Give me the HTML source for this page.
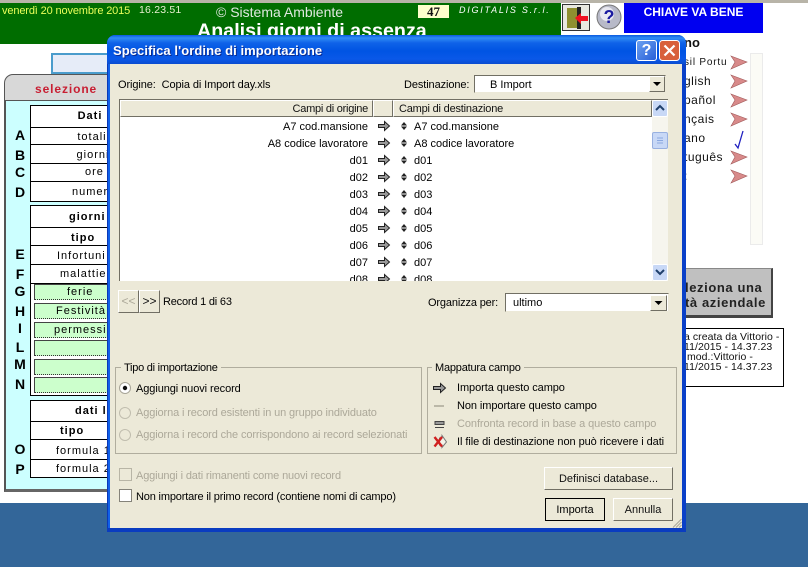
<!DOCTYPE html>
<html><head><meta charset="utf-8">
<style>
html,body{margin:0;padding:0;width:808px;height:567px;overflow:hidden;background:#fff}
body{position:relative;font-family:"Liberation Sans",sans-serif;font-size:11px;color:#000}
.a{position:absolute;white-space:nowrap;box-sizing:border-box}
.c{position:absolute;box-sizing:border-box;background:#fff;border:1px solid #000;border-bottom:none;left:30px;width:90px;text-align:center;font-size:11px;letter-spacing:1px;overflow:hidden;white-space:nowrap}
.g{position:absolute;box-sizing:border-box;left:34px;width:90px;background:#ccffcc;border:1px solid #444;border-right:none;border-bottom:1px dotted #333;text-align:center;font-size:11px;letter-spacing:1px;line-height:15px;height:16px;overflow:hidden}
.l{position:absolute;left:10px;width:20px;text-align:center;font-weight:bold;font-size:14px;line-height:16px}
.r{position:absolute;left:120px;width:248px;text-align:right}
.t{position:absolute;left:414px}
.btn{position:absolute;box-sizing:border-box;background:#ece9d8;border:1px solid;border-color:#fff #716f64 #716f64 #fff;text-align:center;color:#111;font-size:11px}
.dis{color:#aca899}
.lang{position:absolute;font-size:12px;letter-spacing:.5px;color:#111;left:684px;line-height:14px}
</style></head><body>

<!-- background: top -->
<div class="a" style="left:0;top:0;width:808px;height:3px;background:#b8b4a8"></div>
<div class="a" style="left:0;top:3px;width:561px;height:41px;background:#006d00"></div>
<div class="a" style="left:2px;top:5px;color:#eaff5a;font-size:11px;letter-spacing:-.14px">venerdì 20 novembre 2015</div>
<div class="a" style="left:139px;top:4px;color:#e8f0d0;font-size:10.5px;letter-spacing:.2px">16.23.51</div>
<div class="a" style="left:216px;top:4px;color:#dfe8df;font-size:14px">© Sistema Ambiente</div>
<div class="a" style="left:197px;top:20px;color:#fff;font-size:19.7px;font-weight:bold">Analisi giorni di assenza</div>
<div class="a" style="left:418px;top:5px;width:31px;height:13px;background:#ffffcc;text-align:center;font:bold 13px/13px 'Liberation Serif',serif;color:#111">47</div>
<div class="a" style="left:459px;top:3px;color:#fff;font-style:italic;font-size:9px;letter-spacing:1.75px;line-height:15px">DIGITALIS S.r.l.</div>

<!-- exit / help -->
<svg class="a" style="left:561px;top:3px" width="64" height="31" viewBox="0 0 64 31">
<rect x="1.5" y="1.5" width="27" height="26" fill="#e8e8e0" stroke="#333"/>
<rect x="6" y="5" width="10" height="20" fill="#8f8f30"/><rect x="16" y="4" width="4" height="22" fill="#222"/>
<path d="M14 15 L20 10 V13 H27 V18 H20 V21Z" fill="#f01020"/>
<circle cx="48" cy="14" r="12" fill="#b8bac8"/><circle cx="48" cy="14" r="12" fill="none" stroke="#777"/>
<circle cx="46" cy="11" r="7" fill="#e8e8f0"/>
<text x="48" y="20" font-family="Liberation Sans" font-weight="bold" font-size="18" fill="#1a1aa0" text-anchor="middle">?</text>
</svg>
<div class="a" style="left:624px;top:3px;width:139px;height:30px;background:#0000f0;color:#fff;font-weight:bold;font-size:12px;text-align:center;line-height:19px">CHIAVE VA BENE</div>

<!-- left panel -->
<div class="a" style="left:51px;top:53px;width:80px;height:21px;background:#e6ecf8;border:2px solid #4a9ccc"></div>
<div class="a" style="left:4px;top:74px;width:116px;height:27px;background:#d8d8d8;border:1px solid #555;border-bottom:1px solid #888;border-radius:9px 0 0 0"></div>
<div class="a" style="left:35px;top:82px;color:#c81e32;font-weight:bold;font-size:12px;letter-spacing:.9px">selezione</div>
<div class="a" style="left:4px;top:100px;width:116px;height:392px;background:#ccffff;border:1px solid #555;border-left:2px solid #555;border-bottom:3px solid #666"></div>

<div class="c" style="top:105px;height:22px;font-weight:bold;line-height:20px;padding-left:30px">Dati</div>
<div class="c" style="top:127px;height:18px;line-height:18px;padding-left:34px">totali</div>
<div class="c" style="top:144px;height:20px;line-height:21px;padding-left:36px">giorni</div>
<div class="c" style="top:163px;height:19px;line-height:17px;padding-left:54px;text-align:left">ore</div>
<div class="c" style="top:181px;height:21px;border-bottom:1px solid #000;line-height:21px;padding-left:41px;text-align:left">numero</div>
<div class="c" style="top:205px;height:23px;font-weight:bold;line-height:22px;padding-left:38px;text-align:left">giorni</div>
<div class="c" style="top:227px;height:19px;font-weight:bold;line-height:20px;padding-left:40px;text-align:left">tipo</div>
<div class="c" style="top:245px;height:20px;line-height:20px;padding-left:26px;text-align:left">Infortuni</div>
<div class="c" style="top:264px;height:20px;line-height:19px;padding-left:29px;text-align:left">malattie</div>
<div class="c" style="top:283px;height:113px;border-bottom:1px solid #000"></div>
<div class="g" style="top:284px;text-align:left;text-indent:32px">ferie</div>
<div class="g" style="top:303px;text-align:left;text-indent:21px">Festività</div>
<div class="g" style="top:322px;text-align:left;text-indent:19px">permessi</div>
<div class="g" style="top:340px"></div>
<div class="g" style="top:359px"></div>
<div class="g" style="top:377px"></div>
<div class="c" style="top:400px;height:22px;font-weight:bold;line-height:21px;padding-left:44px;text-align:left">dati l</div>
<div class="c" style="top:421px;height:19px;font-weight:bold;line-height:18px;padding-left:29px;text-align:left">tipo</div>
<div class="c" style="top:439px;height:21px;line-height:22px;padding-left:25px;text-align:left">formula 1</div>
<div class="c" style="top:459px;height:19px;border-bottom:1px solid #000;line-height:19px;padding-left:25px;text-align:left">formula 2</div>

<div class="l" style="top:127px">A</div><div class="l" style="top:147px">B</div><div class="l" style="top:164px">C</div>
<div class="l" style="top:184px">D</div><div class="l" style="top:246px">E</div><div class="l" style="top:266px">F</div>
<div class="l" style="top:283px">G</div><div class="l" style="top:303px">H</div><div class="l" style="top:320px">I</div>
<div class="l" style="top:339px">L</div><div class="l" style="top:356px">M</div><div class="l" style="top:376px">N</div>
<div class="l" style="top:441px">O</div><div class="l" style="top:461px">P</div>

<!-- right side behind dialog -->
<div class="a" style="left:684px;top:35px;font-weight:bold;font-size:13px;color:#111">no</div>
<div class="a" style="left:750px;top:53px;width:13px;height:192px;background:#fbfbf6;border:1px solid #ebebeb"></div>
<div class="a" style="left:684px;top:57px;font-size:10px;letter-spacing:.8px;color:#111">sil Portu</div>
<div class="lang" style="top:74px">glish</div>
<div class="lang" style="top:93px">pañol</div>
<div class="lang" style="top:112px">nçais</div>
<div class="lang" style="top:131px">ano</div>
<div class="lang" style="top:150px">tuguês</div>
<div class="lang" style="top:169px">:</div>
<svg class="a" style="left:730px;top:54px" width="18" height="135" viewBox="0 0 18 135">
<g fill="#d88a8a" stroke="#a05858" stroke-width=".6">
<path d="M1 2 L17 8 L1 15 L5 8Z"/><path d="M1 21 L17 27 L1 34 L5 27Z"/><path d="M1 40 L17 46 L1 53 L5 46Z"/><path d="M1 59 L17 65 L1 72 L5 65Z"/><path d="M1 97 L17 103 L1 110 L5 103Z"/><path d="M1 116 L17 122 L1 129 L5 122Z"/>
</g>
<path d="M5 90 L8 94 L13 77" fill="none" stroke="#2020c0" stroke-width="1.3"/>
</svg>
<div class="a" style="left:684px;top:268px;width:89px;height:50px;background:#c0c0c0;border:1px solid #888;border-right:2px solid #444;border-bottom:3px solid #444;font-weight:bold;font-size:13px;letter-spacing:.6px;line-height:15px;padding-top:11px;color:#222">leziona una<br>tà aziendale</div>
<div class="a" style="left:684px;top:328px;width:100px;height:59px;background:#fff;border:1px solid #000;border-left:none;font-size:10.5px;line-height:10px;padding-top:3px;letter-spacing:.05px;color:#111">a creata da Vittorio -<br>11/2015 - 14.37.23<br>&nbsp;mod.:Vittorio -<br>11/2015 - 14.37.23</div>

<!-- bottom band -->
<div class="a" style="left:0;top:503px;width:808px;height:64px;background:#336699"></div>

<!-- dialog -->
<div class="a" style="left:107px;top:35px;width:579px;height:497px;background:#0a40d8;border-radius:8px 8px 0 0"></div>
<div class="a" style="left:107px;top:35px;width:579px;height:29px;border-radius:8px 8px 0 0;background:linear-gradient(180deg,#0a5ae0 0,#2f8cf5 3px,#0f62e8 8px,#0054e3 16px,#0a58e8 24px,#0a4cd0 29px)"></div>
<div class="a" style="left:107px;top:64px;width:1px;height:468px;background:#0a38b8"></div>
<div class="a" style="left:108px;top:64px;width:2px;height:464px;background:#1060e8"></div>
<div class="a" style="left:682px;top:64px;width:4px;height:468px;background:#0a40c8"></div>
<div class="a" style="left:107px;top:528px;width:579px;height:4px;background:#0a3cc0"></div>
<div class="a" style="left:113px;top:43px;color:#fff;font-weight:bold;font-size:13px;line-height:16px;text-shadow:1px 1px 0 #0a2a90;letter-spacing:.07px">Specifica l'ordine di importazione</div>

<div class="a" style="left:636px;top:40px;width:21px;height:21px;background:linear-gradient(135deg,#6aa0f0,#2a60d8);border:1px solid #fff;border-radius:3px;color:#fff;font-weight:bold;font-size:16px;line-height:19px;text-align:center">?</div>
<svg class="a" style="left:659px;top:40px" width="21" height="21" viewBox="0 0 21 21">
<rect x=".5" y=".5" width="20" height="20" rx="3" fill="#d8603c" stroke="#fff"/>
<path d="M5.5 5.5 L15.5 15.5 M15.5 5.5 L5.5 15.5" stroke="#fff" stroke-width="2.2"/>
</svg>

<!-- body -->
<div class="a" style="left:110px;top:64px;width:572px;height:464px;background:#ece9d8"></div>

<div class="a" style="left:118px;top:79px;letter-spacing:-.1px">Origine:&nbsp; Copia di Import day.xls</div>
<div class="a" style="left:404px;top:79px;letter-spacing:-.1px">Destinazione:</div>
<div class="a" style="left:474px;top:75px;width:192px;height:18px;background:#fff;border:1px solid;border-color:#716f64 #ece9d8 #ece9d8 #716f64;padding:3px 0 0 15px">B Import</div>
<div class="btn" style="left:649px;top:76px;width:16px;height:16px"></div>
<svg class="a" style="left:649px;top:76px" width="16" height="16"><path d="M4 6 H12 L8 10Z" fill="#000"/></svg>

<!-- table -->
<div class="a" style="left:119px;top:99px;width:549px;height:182px;background:#fff;border-left:1px solid #716f64;border-top:1px solid #716f64;overflow:hidden"></div>
<div class="btn" style="left:120px;top:100px;width:253px;height:17px;text-align:right;padding-right:4px;line-height:17px;letter-spacing:-.25px">Campi di origine</div>
<div class="btn" style="left:373px;top:100px;width:20px;height:17px"></div>
<div class="btn" style="left:393px;top:100px;width:259px;height:17px;text-align:left;padding-left:5px;line-height:17px;letter-spacing:-.2px">Campi di destinazione</div>
<div class="a" style="left:652px;top:100px;width:16px;height:181px;background:#f6f5ee"></div>
<div class="a" style="left:652px;top:100px;width:16px;height:17px;background:#c8d8f6;border:1px solid #fff;border-radius:2px"></div>
<svg class="a" style="left:652px;top:100px" width="16" height="17"><path d="M4 10 L8 6 L12 10" fill="none" stroke="#20406c" stroke-width="2"/></svg>
<div class="a" style="left:652px;top:132px;width:16px;height:17px;background:#c8d8f6;border:1px solid #98b0e0;border-radius:2px"></div>
<svg class="a" style="left:652px;top:132px" width="16" height="17"><path d="M5 6 H11 M5 8.5 H11 M5 11 H11" stroke="#8aa8e0"/></svg>
<div class="a" style="left:652px;top:264px;width:16px;height:17px;background:#c8d8f6;border:1px solid #fff;border-radius:2px"></div>
<svg class="a" style="left:652px;top:264px" width="16" height="17"><path d="M4 6 L8 10 L12 6" fill="none" stroke="#20406c" stroke-width="2"/></svg>

<div class="a" style="left:120px;top:117px;width:532px;height:164px;overflow:hidden">
<div style="position:relative;left:-120px;top:-117px;width:660px;height:300px">
<div class="r" style="top:121px">A7 cod.mansione</div><div class="t" style="top:121px">A7 cod.mansione</div>
<div class="r" style="top:138px">A8 codice lavoratore</div><div class="t" style="top:138px">A8 codice lavoratore</div>
<div class="r" style="top:155px">d01</div><div class="t" style="top:155px">d01</div>
<div class="r" style="top:172px">d02</div><div class="t" style="top:172px">d02</div>
<div class="r" style="top:189px">d03</div><div class="t" style="top:189px">d03</div>
<div class="r" style="top:206px">d04</div><div class="t" style="top:206px">d04</div>
<div class="r" style="top:223px">d05</div><div class="t" style="top:223px">d05</div>
<div class="r" style="top:240px">d06</div><div class="t" style="top:240px">d06</div>
<div class="r" style="top:257px">d07</div><div class="t" style="top:257px">d07</div>
<div class="r" style="top:274px">d08</div><div class="t" style="top:274px">d08</div>
<svg style="position:absolute;left:376px;top:118px" width="34" height="170" viewBox="0 0 34 170">
<g fill="#999" stroke="#222">
<path d="M2.5 6.5 H8.5 V3.5 L13.5 8 L8.5 12.5 V9.5 H2.5Z"/>
<path d="M2.5 23.5 H8.5 V20.5 L13.5 25 L8.5 29.5 V26.5 H2.5Z"/>
<path d="M2.5 40.5 H8.5 V37.5 L13.5 42 L8.5 46.5 V43.5 H2.5Z"/>
<path d="M2.5 57.5 H8.5 V54.5 L13.5 59 L8.5 63.5 V60.5 H2.5Z"/>
<path d="M2.5 74.5 H8.5 V71.5 L13.5 76 L8.5 80.5 V77.5 H2.5Z"/>
<path d="M2.5 91.5 H8.5 V88.5 L13.5 93 L8.5 97.5 V94.5 H2.5Z"/>
<path d="M2.5 108.5 H8.5 V105.5 L13.5 110 L8.5 114.5 V111.5 H2.5Z"/>
<path d="M2.5 125.5 H8.5 V122.5 L13.5 127 L8.5 131.5 V128.5 H2.5Z"/>
<path d="M2.5 142.5 H8.5 V139.5 L13.5 144 L8.5 148.5 V145.5 H2.5Z"/>
<path d="M2.5 159.5 H8.5 V156.5 L13.5 161 L8.5 165.5 V162.5 H2.5Z"/>
</g>
<g fill="#222">
<path d="M28 4 L31 7.5 H25Z M25 8.5 H31 L28 12Z"/>
<path d="M28 21 L31 24.5 H25Z M25 25.5 H31 L28 29Z"/>
<path d="M28 38 L31 41.5 H25Z M25 42.5 H31 L28 46Z"/>
<path d="M28 55 L31 58.5 H25Z M25 59.5 H31 L28 63Z"/>
<path d="M28 72 L31 75.5 H25Z M25 76.5 H31 L28 80Z"/>
<path d="M28 89 L31 92.5 H25Z M25 93.5 H31 L28 97Z"/>
<path d="M28 106 L31 109.5 H25Z M25 110.5 H31 L28 114Z"/>
<path d="M28 123 L31 126.5 H25Z M25 127.5 H31 L28 131Z"/>
<path d="M28 140 L31 143.5 H25Z M25 144.5 H31 L28 148Z"/>
<path d="M28 157 L31 160.5 H25Z M25 161.5 H31 L28 165Z"/>
</g></svg>
</div></div>

<!-- nav -->
<div class="btn dis" style="left:118px;top:290px;width:21px;height:23px;line-height:21px;font-size:12px">&lt;&lt;</div>
<div class="btn" style="left:139px;top:290px;width:21px;height:23px;line-height:21px;font-size:12px">&gt;&gt;</div>
<div class="a" style="left:163px;top:296px;letter-spacing:-.2px">Record 1 di 63</div>
<div class="a" style="left:428px;top:297px;letter-spacing:-.15px">Organizza per:</div>
<div class="a" style="left:505px;top:293px;width:164px;height:19px;background:#fff;border:1px solid;border-color:#716f64 #ece9d8 #ece9d8 #716f64;padding:3px 0 0 7px">ultimo</div>
<div class="btn" style="left:650px;top:295px;width:17px;height:16px"></div>
<svg class="a" style="left:650px;top:295px" width="17" height="16"><path d="M4.5 6 H12.5 L8.5 10Z" fill="#000"/></svg>

<!-- group 1 -->
<div class="a" style="left:115px;top:367px;width:307px;height:87px;border:1px solid #b0ad9e"></div>
<div class="a" style="left:121px;top:362px;background:#ece9d8;padding:0 3px;letter-spacing:-.25px">Tipo di importazione</div>
<svg class="a" style="left:118px;top:381px" width="14" height="62">
<circle cx="7" cy="7" r="5.5" fill="#fff" stroke="#a8a598"/><circle cx="7" cy="7" r="2.2" fill="#111"/>
<circle cx="7" cy="32" r="5.5" fill="#ece9d8" stroke="#c0bdae"/>
<circle cx="7" cy="54" r="5.5" fill="#ece9d8" stroke="#c0bdae"/>
</svg>
<div class="a" style="left:136px;top:383px;letter-spacing:-.08px">Aggiungi nuovi record</div>
<div class="a dis" style="left:136px;top:407px;letter-spacing:-.12px">Aggiorna i record esistenti in un gruppo individuato</div>
<div class="a dis" style="left:136px;top:429px;letter-spacing:-.12px">Aggiorna i record che corrispondono ai record selezionati</div>

<!-- group 2 -->
<div class="a" style="left:427px;top:367px;width:250px;height:87px;border:1px solid #b0ad9e"></div>
<div class="a" style="left:432px;top:362px;background:#ece9d8;padding:0 3px;letter-spacing:-.2px">Mappatura campo</div>
<div class="a" style="left:457px;top:382px;letter-spacing:-.08px">Importa questo campo</div>
<div class="a" style="left:457px;top:400px;letter-spacing:-.08px">Non importare questo campo</div>
<div class="a dis" style="left:457px;top:418px;letter-spacing:-.08px">Confronta record in base a questo campo</div>
<div class="a" style="left:457px;top:436px;letter-spacing:-.07px">Il file di destinazione non può ricevere i dati</div>
<svg class="a" style="left:432px;top:380px" width="16" height="70">
<path d="M1.5 6.5 H8.5 V3.5 L13.5 8 L8.5 12.5 V9.5 H1.5Z" fill="#999" stroke="#222"/>
<path d="M2 26 H12" stroke="#8a8878"/>
<path d="M3 41.5 H12 V44.5 H3Z" fill="#999" stroke="#444"/><path d="M3 47.5 H12" stroke="#444"/>
<path d="M7.5 58 H10 V55.5 L14.5 62 L10 67.5 V65 H7.5Z" fill="#f4f2e8" stroke="#777"/>
<path d="M2.5 57 L10 66.5 M10 57 L2.5 66.5" stroke="#d02020" stroke-width="2.4"/>
</svg>

<!-- checkboxes -->
<div class="a" style="left:119px;top:468px;width:13px;height:13px;border:1px solid #b8b5a6;background:#ece9d8"></div>
<div class="a dis" style="left:136px;top:470px;letter-spacing:-.14px">Aggiungi i dati rimanenti come nuovi record</div>
<div class="a" style="left:119px;top:489px;width:13px;height:13px;border:1px solid #85837a;background:#fff"></div>
<div class="a" style="left:136px;top:491px;letter-spacing:-.17px">Non importare il primo record (contiene nomi di campo)</div>

<!-- buttons -->
<div class="btn" style="left:544px;top:467px;width:129px;height:23px;line-height:22px">Definisci database...</div>
<div class="a" style="left:545px;top:498px;width:60px;height:23px;border:1px solid #000;background:#ece9d8;text-align:center;line-height:22px">Importa</div>
<div class="btn" style="left:613px;top:498px;width:60px;height:23px;line-height:22px">Annulla</div>
<svg class="a" style="left:672px;top:518px" width="10" height="10"><path d="M9.5 1 L1 9.5 M9.5 4 L4 9.5 M9.5 7 L7 9.5" stroke="#a8a598"/></svg>

</body></html>
